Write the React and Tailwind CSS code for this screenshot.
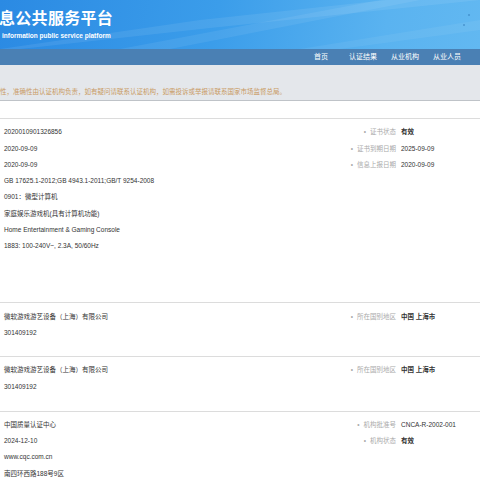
export default function App() {
  const font = { fontFamily: '"Liberation Sans", "Noto Sans CJK SC", sans-serif' };
  const Row = ({ left, label, value, bold }) => (
    <div className="flex h-[16.3px] items-center whitespace-nowrap">
      <div className="flex-1 pl-[4px] text-[6.5px] text-[#333]">{left}</div>
      {label ? (
        <div className="flex w-[180px] items-center">
          <div className="w-[96px] text-right text-[6.5px] text-[#aaa]">
            <span className="mr-[4px]">•</span>
            {label}
          </div>
          <div className={"pl-[5px] text-[6.5px] text-[#333] " + (bold ? "font-bold" : "")}>{value}</div>
        </div>
      ) : null}
    </div>
  );
  return (
    <div className="h-[480px] w-[480px] overflow-hidden bg-white" style={font}>
      <div className="relative h-[49px] overflow-hidden bg-[linear-gradient(100deg,#2b8ae3_0%,#3b9dea_45%,#5ab3f0_80%,#62b8f1_100%)]">
        <svg className="absolute inset-0" width="480" height="49" viewBox="0 0 480 49">
          <path d="M0 49 L200 20 L480 -10 L480 0 L210 28 L20 49 Z" fill="#ffffff" opacity="0.08" />
          <path d="M120 49 L380 0 L420 0 L170 49 Z" fill="#ffffff" opacity="0.07" />
          <path d="M300 49 L480 20 L480 30 L340 49 Z" fill="#ffffff" opacity="0.06" />
          <circle cx="469" cy="15" r="1" fill="#2a6fb0" opacity="0.5" />
          <circle cx="464" cy="25" r="1" fill="#2a6fb0" opacity="0.5" />
        </svg>
        <div className="absolute left-[-1px] top-[11px] text-[16px] font-bold leading-none tracking-[0.3px] text-white">息公共服务平台</div>
        <div className="absolute left-[2px] top-[33px] text-[6.5px] font-bold leading-none text-white">information public service platform</div>
      </div>
      <div className="flex h-[16px] items-center overflow-hidden whitespace-nowrap bg-[#4a80b4] text-[7px] text-white">
        <div className="ml-[300px] flex">
          <span className="w-[42px] text-center">首页</span>
          <span className="w-[42px] text-center">认证结果</span>
          <span className="w-[42px] text-center">从业机构</span>
          <span className="w-[42px] text-center">从业人员</span>
          <span className="w-[42px] text-center">认证</span>
        </div>
      </div>
      <div className="flex h-[36px] items-end border-b border-[#bfc3c8] bg-[#e4e7eb] pb-[3px]">
        <div className="text-[6.5px] text-[#c99a63]">性，准确性由认证机构负责，如有疑问请联系认证机构，如需投诉或举报请联系国家市场监督总局。</div>
      </div>
      <div className="h-[17px]" />
      <div className="border-t border-[#dcdcdc] pt-[5px]">
        <Row left="2020010901326856" label="证书状态" value="有效" bold />
        <Row left="2020-09-09" label="证书到期日期" value="2025-09-09" />
        <Row left="2020-09-09" label="信息上报日期" value="2020-09-09" />
        <Row left="GB 17625.1-2012;GB 4943.1-2011;GB/T 9254-2008" />
        <Row left="0901：微型计算机" />
        <Row left="家庭娱乐游戏机(具有计算机功能)" />
        <Row left="Home Entertainment & Gaming Console" />
        <Row left="1883: 100-240V~, 2.3A, 50/60Hz" />
        <div className="h-[48px]" />
      </div>
      <div className="border-t border-[#dcdcdc] pt-[5px]">
        <Row left="微软游戏游艺设备（上海）有限公司" label="所在国别地区" value="中国 上海市" bold />
        <Row left="301409192" />
        <div className="h-[15px]" />
      </div>
      <div className="border-t border-[#dcdcdc] pt-[5px]">
        <Row left="微软游戏游艺设备（上海）有限公司" label="所在国别地区" value="中国 上海市" bold />
        <Row left="301409192" />
        <div className="h-[16px]" />
      </div>
      <div className="border-t border-[#dcdcdc] pt-[5px]">
        <Row left="中国质量认证中心" label="机构批准号" value="CNCA-R-2002-001" />
        <Row left="2024-12-10" label="机构状态" value="有效" bold />
        <Row left="www.cqc.com.cn" />
        <Row left="南四环西路188号9区" />
      </div>
    </div>
  );
}
